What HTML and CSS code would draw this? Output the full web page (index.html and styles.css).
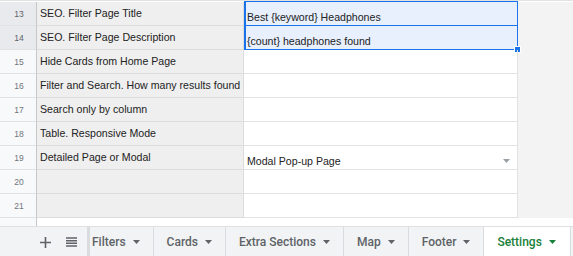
FILE: index.html
```html
<!DOCTYPE html>
<html lang="en">
<head>
    <meta charset="UTF-8">
    <meta name="viewport" content="width=device-width, initial-scale=1.0">
    <title>Settings</title>
    <link rel="stylesheet" href="styles.css">
</head>
<body>

    <div class="sheet">
        <div class="row">
            <div class="num active">13</div>
            <div class="cell label">SEO. Filter Page Title</div>
            <div class="cell value selected">Best {keyword} Headphones</div>
            <div class="outside"></div>
        </div>
        <div class="row">
            <div class="num active">14</div>
            <div class="cell label">SEO. Filter Page Description</div>
            <div class="cell value selected">{count} headphones found<span class="handle"></span></div>
            <div class="outside"></div>
        </div>
        <div class="row">
            <div class="num">15</div>
            <div class="cell label">Hide Cards from Home Page</div>
            <div class="cell value"></div>
            <div class="outside"></div>
        </div>
        <div class="row">
            <div class="num">16</div>
            <div class="cell label">Filter and Search. How many results found</div>
            <div class="cell value"></div>
            <div class="outside"></div>
        </div>
        <div class="row">
            <div class="num">17</div>
            <div class="cell label">Search only by column</div>
            <div class="cell value"></div>
            <div class="outside"></div>
        </div>
        <div class="row">
            <div class="num">18</div>
            <div class="cell label">Table. Responsive Mode</div>
            <div class="cell value"></div>
            <div class="outside"></div>
        </div>
        <div class="row">
            <div class="num">19</div>
            <div class="cell label">Detailed Page or Modal</div>
            <div class="cell value dropdown">
                <span>Modal Pop-up Page</span>
                <svg class="caret" width="7" height="4" viewBox="0 0 7 4"><path d="M0 0h7L3.5 4z" fill="#9aa0a6"/></svg>
            </div>
            <div class="outside"></div>
        </div>
        <div class="row">
            <div class="num">20</div>
            <div class="cell label"></div>
            <div class="cell value"></div>
            <div class="outside"></div>
        </div>
        <div class="row">
            <div class="num">21</div>
            <div class="cell label"></div>
            <div class="cell value"></div>
            <div class="outside"></div>
        </div>
        <div class="row spacer">
            <div class="num"></div>
            <div></div>
        </div>
    </div>

    <div class="tabbar">
        <div class="tools">
            <svg width="11" height="11" viewBox="0 0 11 11"><path d="M5.5 0v11M0 5.5h11" stroke="#5f6368" stroke-width="1.6"/></svg>
            <svg width="11" height="10" viewBox="0 0 11 10"><path d="M0 1h11M0 3.7h11M0 6.3h11M0 9h11" stroke="#5f6368" stroke-width="1.5"/></svg>
        </div>
        <div class="tabs">
            <div class="tab first">Filters <svg width="7" height="4" viewBox="0 0 7 4"><path d="M0 0h7L3.5 4z"/></svg></div>
            <div class="tab">Cards <svg width="7" height="4" viewBox="0 0 7 4"><path d="M0 0h7L3.5 4z"/></svg></div>
            <div class="tab">Extra Sections <svg width="7" height="4" viewBox="0 0 7 4"><path d="M0 0h7L3.5 4z"/></svg></div>
            <div class="tab">Map <svg width="7" height="4" viewBox="0 0 7 4"><path d="M0 0h7L3.5 4z"/></svg></div>
            <div class="tab">Footer <svg width="7" height="4" viewBox="0 0 7 4"><path d="M0 0h7L3.5 4z"/></svg></div>
            <div class="tab current">Settings <svg width="7" height="4" viewBox="0 0 7 4"><path d="M0 0h7L3.5 4z"/></svg></div>
        </div>
    </div>

</body>
</html>
```

FILE: styles.css
```css
* {
    margin: 0;
    padding: 0;
    box-sizing: border-box;
}

body {
    width: 573px;
    height: 256px;
    overflow: hidden;
    background: #fff;
    font-family: "Liberation Sans", Arial, sans-serif;
}

.sheet {
    padding-top: 1px;
    border-top: 1px solid #e2e2e2;
}

.row {
    display: grid;
    grid-template-columns: 37px 207px 274px 1fr;
    height: 24px;
}

.num {
    background: #f8f9fa;
    border-right: 1px solid #c7c7c7;
    border-bottom: 1px solid #e2e2e2;
    color: #70757a;
    font-size: 8.5px;
    display: flex;
    align-items: center;
    justify-content: center;
    padding-left: 2px;
}

.num.active {
    background: #e8eaed;
    color: #5f6368;
}

.cell {
    border-right: 1px solid #e2e2e2;
    border-bottom: 1px solid #e2e2e2;
    font-size: 10.6px;
    color: #222;
    white-space: nowrap;
    overflow: hidden;
}

.label {
    background: #efefef;
    border-color: #dcdcdc;
    padding-left: 3px;
    display: flex;
    align-items: center;
    padding-bottom: 1px;
}

.value {
    position: relative;
    padding-left: 3px;
    display: flex;
    align-items: flex-end;
    padding-bottom: 2px;
    overflow: visible;
}

.value.selected {
    background: #e8f0fe;
    border: 1px solid #1a73e8;
    border-left-width: 2px;
    margin-top: -1px;
    height: 25px;
    padding-left: 1px;
}

.dropdown {
    justify-content: space-between;
    padding-right: 7px;
}

.caret {
    margin-bottom: 4px;
}

.handle {
    position: absolute;
    right: -4px;
    bottom: -4px;
    width: 7px;
    height: 7px;
    background: #1a73e8;
    border: 1px solid #fff;
}

.outside {
    background: #f3f3f3;
}

.row.spacer {
    height: 8px;
}

.spacer .num {
    border-bottom: none;
}

.tabbar {
    height: 31px;
    background: #f1f3f4;
    border-top: 1px solid #e0e0e0;
    display: flex;
    font-family: Roboto, "Noto Sans", sans-serif;
}

.tools {
    flex-shrink: 0;
    width: 90px;
    display: flex;
    align-items: center;
    gap: 15px;
    padding-left: 40px;
    border-right: 3px solid #dadce0;
}

.tabs {
    display: flex;
}

.tab {
    flex-shrink: 0;
    display: flex;
    align-items: center;
    gap: 7px;
    padding: 0 13px;
    border-right: 1px solid #dadce0;
    font-size: 12px;
    font-weight: 500;
    color: #5f6368;
    white-space: nowrap;
}

.tab svg {
    fill: #5f6368;
}

.tab.first {
    padding-left: 2px;
}

.tab.current {
    background: #fff;
    color: #188038;
    padding-right: 14px;
}

.tab.current svg {
    fill: #188038;
}
```
